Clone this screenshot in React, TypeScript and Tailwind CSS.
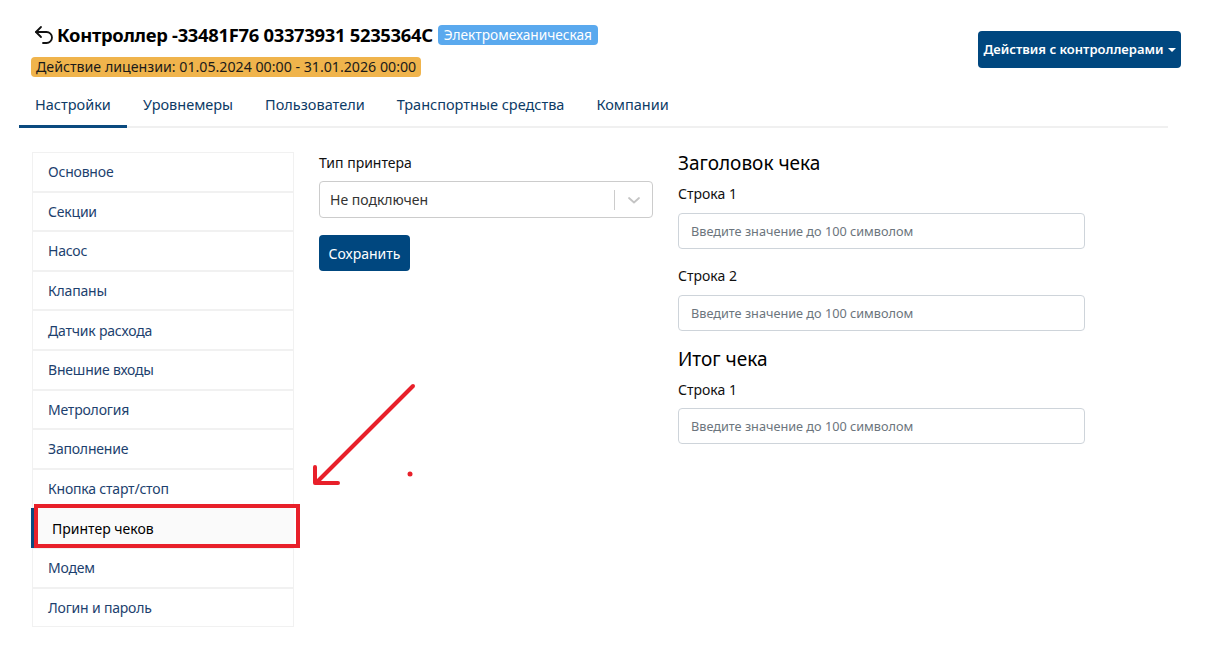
import React from "react";

const items = [
  "Основное",
  "Секции",
  "Насос",
  "Клапаны",
  "Датчик расхода",
  "Внешние входы",
  "Метрология",
  "Заполнение",
  "Кнопка старт/стоп",
  "Принтер чеков",
  "Модем",
  "Логин и пароль",
];

const tabs = ["Настройки", "Уровнемеры", "Пользователи", "Транспортные средства", "Компании"];

function Field({ label, top, gap }: { label: string; top: string; gap: string }) {
  return (
    <div className={top}>
      <div className="text-[14px] leading-[20px] text-[#111]">{label}</div>
      <input
        className={gap + " h-[36px] w-full rounded-[4px] border border-[#ced4da] px-[12px] text-[12.7px] text-[#333] placeholder:text-[#6c757d] outline-none"}
        placeholder="Введите значение до 100 символом"
      />
    </div>
  );
}

export default function App() {
  return (
    <div
      className="relative min-h-[655px] w-[1214px] bg-white text-[#111]"
      style={{ fontFamily: '"Noto Sans", "Open Sans", sans-serif' }}
    >
      <div className="pl-[19px] pr-[33px] pt-[22px]">
        {/* Header */}
        <div className="flex items-start justify-between">
          <div className="pl-[12px]">
            <div className="flex items-center h-[25px]">
              <svg width="24" height="24" viewBox="0 0 24 24" fill="none" stroke="#111" strokeWidth="1.8" strokeLinecap="round" strokeLinejoin="round" className="ml-[1px]">
                <path d="M9 14 4 9l5-5" />
                <path d="M4 9h10.5a5.5 5.5 0 0 1 5.5 5.5 5.5 5.5 0 0 1-5.5 5.5H11" />
              </svg>
              <span className="ml-[1px] text-[18.4px] font-bold tracking-[-0.3px] leading-[25px] text-black">
                Контроллер -33481F76 03373931 5235364C
              </span>
              <span className="ml-[5px] rounded-[4px] bg-[#5aa9ee] px-[6px] text-[13.7px] leading-[20px] text-white">
                Электромеханическая
              </span>
            </div>
            <div className="mt-[10px] inline-block rounded-[4px] bg-[#f0b44c] px-[5px] text-[14.2px] leading-[20px] text-[#1a1a1a]">
              Действие лицензии: 01.05.2024 00:00 - 31.01.2026 00:00
            </div>
          </div>
          <button className="mt-[9px] flex h-[37px] w-[203px] items-center justify-center rounded-[4px] bg-[#00477f] text-[13px] font-semibold text-white">
            Действия с контроллерами
            <span className="ml-[4px] inline-block h-0 w-0 border-x-[4px] border-t-[4px] border-x-transparent border-t-white" />
          </button>
        </div>

        {/* Tabs */}
        <div className="mt-[5px] flex w-[1149px] border-b-2 border-[#f0f0f0]">
          {tabs.map((t, i) => (
            <div
              key={t}
              className={
                "-mb-[2px] px-[16px] pb-[9px] pt-[9px] text-[14.5px] leading-[24px] text-[#0d3b66] border-b-[3px] " +
                (i === 0 ? "border-[#0a4a7f]" : "border-transparent")
              }
            >
              {t}
            </div>
          ))}
        </div>

        {/* Body */}
        <div className="mt-[24px] flex pl-[13px]">
          <div className="w-[262px] shrink-0">
            {items.map((it) => {
              const active = it === "Принтер чеков";
              return active ? (
                <div
                  key={it}
                  className="-ml-[1px] flex h-[39.6px] items-center border-l-4 border-[#0a4a7f] bg-[#fafafa] pl-[17px] text-[14px] text-black"
                >
                  {it}
                </div>
              ) : (
                <div
                  key={it}
                  className="flex h-[39.6px] items-center border border-[#f1f1f1] pl-[15px] text-[14px] tracking-[-0.2px] text-[#1d3f6e]"
                >
                  {it}
                </div>
              );
            })}
          </div>

          <div className="ml-[25px] w-[334px] shrink-0">
            <div className="mt-[1px] text-[14px] leading-[20px] text-[#111]">Тип принтера</div>
            <div className="mt-[8px] flex h-[37px] items-center rounded-[4px] border border-[#cccccc]">
              <span className="flex-1 pl-[10px] text-[14px] text-[#333]">Не подключен</span>
              <span className="h-[20px] w-px bg-[#cccccc]" />
              <span className="flex w-[37px] items-center justify-center">
                <svg width="14" height="10" viewBox="0 0 14 10" fill="none" stroke="#c4c4c4" strokeWidth="1.8" strokeLinecap="round" strokeLinejoin="round">
                  <polyline points="2,3 7,7.5 12,3" />
                </svg>
              </span>
            </div>
            <button className="mt-[17px] h-[36px] w-[91px] rounded-[4px] bg-[#00477f] text-[14px] text-white">
              Сохранить
            </button>
          </div>

          <div className="ml-[25px] w-[407px] shrink-0">
            <div className="-mt-[1px] text-[19px] leading-[24px] text-black">Заголовок чека</div>
            <Field label="Строка 1" top="mt-[9px]" gap="mt-[9px]" />
            <Field label="Строка 2" top="mt-[17px]" gap="mt-[9px]" />
            <div className="mt-[16px] text-[19px] leading-[24px] text-black">Итог чека</div>
            <Field label="Строка 1" top="mt-[9px]" gap="mt-[8px]" />
          </div>
        </div>
      </div>

      {/* Annotations */}
      <div className="pointer-events-none absolute left-[34px] top-[504px] h-[44px] w-[266px] border-4 border-[#e8202a]" />
      <svg className="pointer-events-none absolute left-0 top-0" width="1214" height="655">
        <g stroke="#e8202a" strokeWidth="4" strokeLinecap="round" fill="none">
          <line x1="413" y1="386" x2="317" y2="482" />
          <polyline points="315,467 315,483 338,483" strokeLinejoin="round" />
        </g>
        <circle cx="410" cy="474" r="2.5" fill="#e8202a" />
      </svg>
    </div>
  );
}
